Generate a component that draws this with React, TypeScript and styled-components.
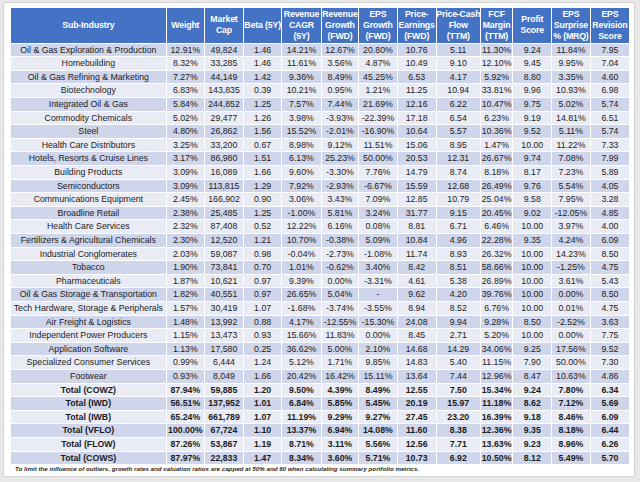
import React from "react";
import styled, { createGlobalStyle } from "styled-components";

const Global = createGlobalStyle`
  html, body { margin: 0; padding: 0; background: #e8e8e8; }
  body { font-family: "Liberation Sans", Arial, sans-serif; }
`;

const COLS =
  "154.7px 37.3px 38px 37.3px 38.4px 36.6px 37.4px 38px 43.3px 31.3px 38px 37.4px 38.6px";

const Panel = styled.div`
  margin: 2px 0 0 3px;
  width: 616px;
  height: 463px;
  padding: 5px 7px 5px 7px;
  background: #ffffff;
  border: 1px solid #d4d4d4;
  display: flex;
  flex-direction: column;
`;

const Table = styled.div`
  display: flex;
  flex-direction: column;
  gap: 1px;
  width: 618.3px;
  background: #ffffff;
`;

const Row = styled.div<{ $header?: boolean }>`
  display: grid;
  grid-template-columns: ${COLS};
  column-gap: 1px;
  height: ${(p) => (p.$header ? "34.7px" : "12.6px")};
`;

const HeadCell = styled.div`
  background: #4472c4;
  color: #ffffff;
  font-weight: bold;
  font-size: 8.75px;
  line-height: 11px;
  letter-spacing: -0.15px;
  white-space: nowrap;
  display: flex;
  align-items: center;
  justify-content: center;
  text-align: center;
  overflow: visible;
`;

const Cell = styled.div<{ $dark: boolean; $bold: boolean }>`
  background: ${(p) => (p.$dark ? "#cfd5ea" : "#e9ebf5")};
  color: #1c1c1c;
  font-size: 8.75px;
  font-weight: ${(p) => (p.$bold ? "bold" : "normal")};
  line-height: 12.6px;
  text-align: center;
  white-space: nowrap;
  overflow: visible;
`;

const Note = styled.div`
  margin: 1px 0 0 4px;
  font-size: 6.2px;
  font-style: italic;
  font-weight: bold;
  color: #2a2a2a;
  line-height: 7px;
  white-space: nowrap;
`;

const headers: string[][] = [
  ["Sub-Industry"],
  ["Weight"],
  ["Market", "Cap"],
  ["Beta (5Y)"],
  ["Revenue", "CAGR", "(5Y)"],
  ["Revenue", "Growth", "(FWD)"],
  ["EPS", "Growth", "(FWD)"],
  ["Price-", "Earnings", "(FWD)"],
  ["Price-Cash", "Flow", "(TTM)"],
  ["FCF", "Margin", "(TTM)"],
  ["Profit", "Score"],
  ["EPS", "Surprise", "% (MRQ)"],
  ["EPS", "Revision", "Score"],
];

const rows: string[][] = [
  ["Oil & Gas Exploration & Production", "12.91%", "49,824", "1.46", "14.21%", "12.67%", "20.80%", "10.76", "5.11", "11.30%", "9.24", "11.84%", "7.95"],
  ["Homebuilding", "8.32%", "33,285", "1.46", "11.61%", "3.56%", "4.87%", "10.49", "9.10", "12.10%", "9.45", "9.95%", "7.04"],
  ["Oil & Gas Refining & Marketing", "7.27%", "44,149", "1.42", "9.36%", "8.49%", "45.25%", "6.53", "4.17", "5.92%", "8.80", "3.35%", "4.60"],
  ["Biotechnology", "6.83%", "143,835", "0.39", "10.21%", "0.95%", "1.21%", "11.25", "10.94", "33.81%", "9.96", "10.93%", "6.98"],
  ["Integrated Oil & Gas", "5.84%", "244,852", "1.25", "7.57%", "7.44%", "21.69%", "12.16", "6.22", "10.47%", "9.75", "5.02%", "5.74"],
  ["Commodity Chemicals", "5.02%", "29,477", "1.26", "3.98%", "-3.93%", "-22.39%", "17.18", "6.54", "6.23%", "9.19", "14.81%", "6.51"],
  ["Steel", "4.80%", "26,862", "1.56", "15.52%", "-2.01%", "-16.90%", "10.64", "5.57", "10.36%", "9.52", "5.11%", "5.74"],
  ["Health Care Distributors", "3.25%", "33,200", "0.67", "8.98%", "9.12%", "11.51%", "15.06", "8.95", "1.47%", "10.00", "11.22%", "7.33"],
  ["Hotels, Resorts & Cruise Lines", "3.17%", "86,980", "1.51", "6.13%", "25.23%", "50.00%", "20.53", "12.31", "26.67%", "9.74", "7.08%", "7.99"],
  ["Building Products", "3.09%", "16,089", "1.66", "9.60%", "-3.30%", "7.76%", "14.79", "8.74", "8.18%", "8.17", "7.23%", "5.89"],
  ["Semiconductors", "3.09%", "113,815", "1.29", "7.92%", "-2.93%", "-6.67%", "15.59", "12.68", "26.49%", "9.76", "5.54%", "4.05"],
  ["Communications Equipment", "2.45%", "166,902", "0.90", "3.06%", "3.43%", "7.09%", "12.85", "10.79", "25.04%", "9.58", "7.95%", "3.28"],
  ["Broadline Retail", "2.38%", "25,485", "1.25", "-1.00%", "5.81%", "3.24%", "31.77", "9.15", "20.45%", "9.02", "-12.05%", "4.85"],
  ["Health Care Services", "2.32%", "87,408", "0.52", "12.22%", "6.16%", "0.08%", "8.81", "6.71", "6.46%", "10.00", "3.97%", "4.00"],
  ["Fertilizers & Agricultural Chemicals", "2.30%", "12,520", "1.21", "10.70%", "-0.38%", "5.09%", "10.84", "4.96", "22.28%", "9.35", "4.24%", "6.09"],
  ["Industrial Conglomerates", "2.03%", "59,087", "0.98", "-0.04%", "-2.73%", "-1.08%", "11.74", "8.93", "26.32%", "10.00", "14.23%", "8.50"],
  ["Tobacco", "1.90%", "73,841", "0.70", "1.01%", "-0.62%", "3.40%", "8.42", "8.51", "58.66%", "10.00", "-1.25%", "4.75"],
  ["Pharmaceuticals", "1.87%", "10,621", "0.97", "9.39%", "0.00%", "-3.31%", "4.61", "5.38", "26.89%", "10.00", "3.61%", "5.43"],
  ["Oil & Gas Storage & Transportation", "1.82%", "40,551", "0.97", "26.65%", "5.04%", "-", "9.62", "4.20", "39.76%", "10.00", "0.00%", "8.50"],
  ["Tech Hardware, Storage & Peripherals", "1.57%", "30,419", "1.07", "-1.68%", "-3.74%", "-3.55%", "8.94", "8.52", "6.76%", "10.00", "0.01%", "4.75"],
  ["Air Freight & Logistics", "1.48%", "13,992", "0.88", "4.17%", "-12.55%", "-15.30%", "24.08", "9.94", "9.28%", "8.50", "-2.52%", "3.63"],
  ["Independent Power Producers", "1.15%", "13,473", "0.93", "15.66%", "11.83%", "0.00%", "8.45", "2.71", "5.20%", "10.00", "0.00%", "7.75"],
  ["Application Software", "1.13%", "17,580", "0.25", "36.62%", "5.00%", "2.10%", "14.68", "14.29", "34.06%", "9.25", "17.56%", "9.52"],
  ["Specialized Consumer Services", "0.99%", "6,444", "1.24", "5.12%", "1.71%", "9.85%", "14.83", "5.40", "11.15%", "7.90", "50.00%", "7.30"],
  ["Footwear", "0.93%", "8,049", "1.66", "20.42%", "16.42%", "15.11%", "13.64", "7.44", "12.96%", "8.47", "10.63%", "4.86"],
];

const totals: string[][] = [
  ["Total (COWZ)", "87.94%", "59,885", "1.20", "9.50%", "4.39%", "8.49%", "12.55", "7.50", "15.34%", "9.24", "7.80%", "6.34"],
  ["Total (IWD)", "56.51%", "137,952", "1.01", "6.84%", "5.85%", "5.45%", "20.19", "15.97", "11.18%", "8.62", "7.12%", "5.69"],
  ["Total (IWB)", "65.24%", "661,789", "1.07", "11.19%", "9.29%", "9.27%", "27.45", "23.20", "16.39%", "9.18", "8.46%", "6.09"],
  ["Total (VFLO)", "100.00%", "67,724", "1.10", "13.37%", "6.94%", "14.08%", "11.60", "8.38", "12.36%", "9.35", "8.18%", "6.44"],
  ["Total (FLOW)", "87.26%", "53,867", "1.19", "8.71%", "3.11%", "5.56%", "12.56", "7.71", "13.63%", "9.23", "8.96%", "6.26"],
  ["Total (COWS)", "87.97%", "22,833", "1.47", "8.34%", "3.60%", "5.71%", "10.73", "6.92", "10.50%", "8.12", "5.49%", "5.70"],
];

export default function App() {
  const all = [
    ...rows.map((r) => ({ r, bold: false })),
    ...totals.map((r) => ({ r, bold: true })),
  ];
  return (
    <>
      <Global />
      <Panel>
        <Table>
          <Row $header>
            {headers.map((h, i) => (
              <HeadCell key={i}>
                <span>
                  {h.map((line, j) => (
                    <React.Fragment key={j}>
                      {j > 0 && <br />}
                      {line}
                    </React.Fragment>
                  ))}
                </span>
              </HeadCell>
            ))}
          </Row>
          {all.map(({ r, bold }, i) => (
            <Row key={i}>
              {r.map((v, j) => (
                <Cell key={j} $dark={i % 2 === 0} $bold={bold}>
                  {v}
                </Cell>
              ))}
            </Row>
          ))}
        </Table>
        <Note>
          To limit the influence of outliers, growth rates and valuation ratios are capped at 50% and 60 when calculating summary portfolio metrics.
        </Note>
      </Panel>
    </>
  );
}
